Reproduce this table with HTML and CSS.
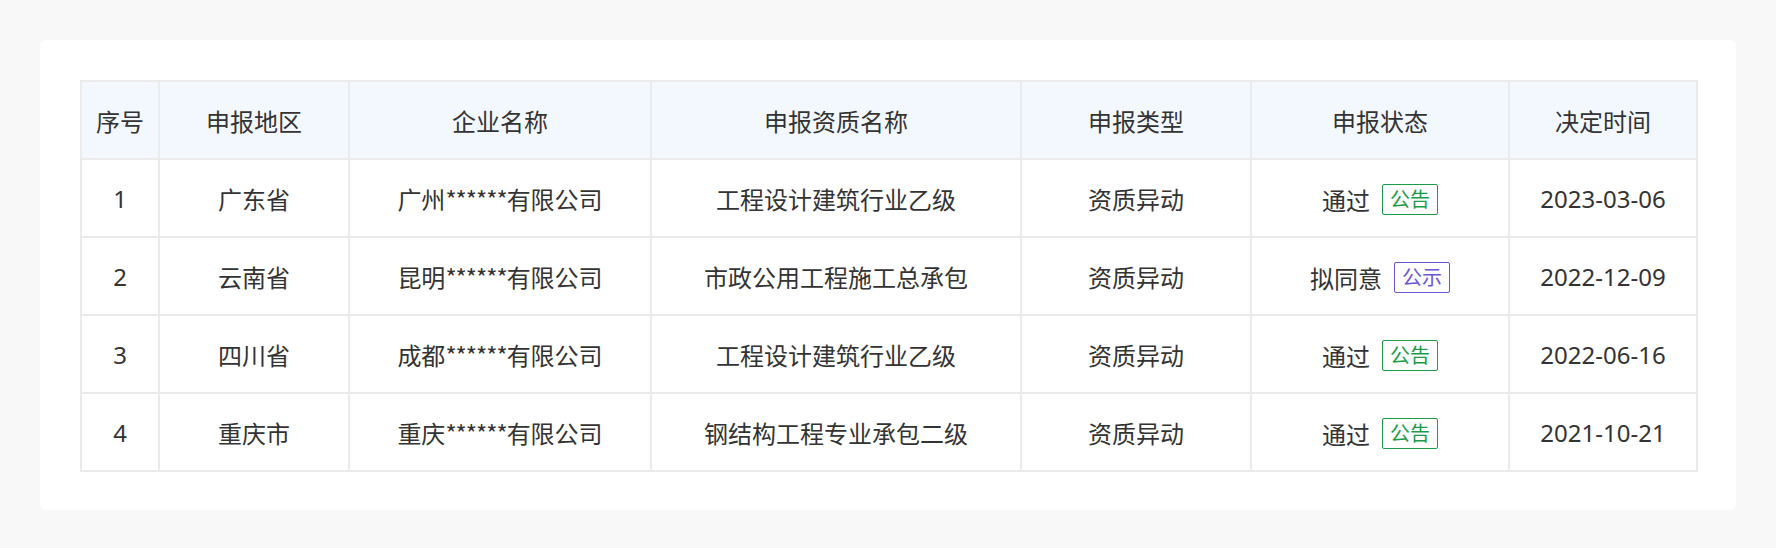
FILE: index.html
```html
<!DOCTYPE html>
<html lang="zh-CN">
<head>
<meta charset="utf-8">
<title>资质申报</title>
<link rel="stylesheet" href="styles.css">
</head>
<body>
<div class="page">
  <div class="card">
    <table class="grid">
      <colgroup>
        <col class="c-no"><col class="c-area"><col class="c-corp"><col class="c-qual"><col class="c-type"><col class="c-state"><col class="c-date">
      </colgroup>
      <thead>
        <tr><th>序号</th><th>申报地区</th><th>企业名称</th><th>申报资质名称</th><th>申报类型</th><th>申报状态</th><th>决定时间</th></tr>
      </thead>
      <tbody>
        <tr><td>1</td><td>广东省</td><td>广州<span class="mask">******</span>有限公司</td><td>工程设计建筑行业乙级</td><td>资质异动</td><td><span class="state">通过</span><span class="tag tag-green">公告</span></td><td>2023-03-06</td></tr>
        <tr><td>2</td><td>云南省</td><td>昆明<span class="mask">******</span>有限公司</td><td>市政公用工程施工总承包</td><td>资质异动</td><td><span class="state">拟同意</span><span class="tag tag-purple">公示</span></td><td>2022-12-09</td></tr>
        <tr><td>3</td><td>四川省</td><td>成都<span class="mask">******</span>有限公司</td><td>工程设计建筑行业乙级</td><td>资质异动</td><td><span class="state">通过</span><span class="tag tag-green">公告</span></td><td>2022-06-16</td></tr>
        <tr><td>4</td><td>重庆市</td><td>重庆<span class="mask">******</span>有限公司</td><td>钢结构工程专业承包二级</td><td>资质异动</td><td><span class="state">通过</span><span class="tag tag-green">公告</span></td><td>2021-10-21</td></tr>
      </tbody>
    </table>
  </div>
</div>
</body>
</html>
```

FILE: styles.css
```css
html, body {
  margin: 0;
  padding: 0;
  background: #f8f8f8;
}
.page {
  padding: 40px;
  font-family: "Noto Sans", "Noto Sans CJK SC", sans-serif;
  color: #333333;
}
.card {
  background: #ffffff;
  border-radius: 6px;
  padding: 40px 40px 38px;
}
.grid {
  width: 100%;
  table-layout: fixed;
  border-collapse: collapse;
  font-size: 24px;
}
.c-no { width: 78px; }
.c-area { width: 190px; }
.c-corp { width: 302px; }
.c-qual { width: 370px; }
.c-type { width: 230px; }
.c-state { width: 258px; }
.c-date { width: 188px; }
.grid th, .grid td {
  border: 2px solid #ebebeb;
  height: 76px;
  padding: 0;
  text-align: center;
  vertical-align: middle;
  font-weight: 400;
  white-space: nowrap;
}
.grid th {
  background: #f3f8ff;
}
.mask {
  font-family: "Noto Sans CJK SC", sans-serif;
  letter-spacing: -1px;
}
.state {
  display: inline-block;
  vertical-align: middle;
}
.tag {
  display: inline-block;
  vertical-align: middle;
  margin-left: 12px;
  font-size: 20px;
  line-height: 29px;
  padding: 0 7px;
  border: 1px solid;
  border-radius: 2px;
}
.tag-green {
  color: #1a9c46;
  border-color: #1a9c46;
}
.tag-purple {
  color: #6a55d8;
  border-color: #6a55d8;
}
```
